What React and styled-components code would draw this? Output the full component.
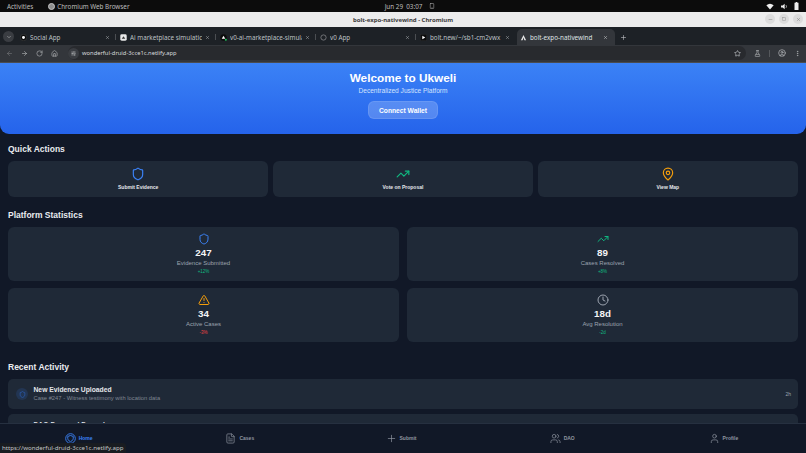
import React from 'react';
import styled, { createGlobalStyle } from 'styled-components';
import { Shield, TrendingUp, MapPin, TriangleAlert, Clock, FileText, Plus, Users, User, ArrowLeft, ArrowRight, RotateCw, House, Star, FlaskConical, CircleUser, EllipsisVertical, ChevronDown, X, Minus, Square, SlidersHorizontal, Smartphone } from 'lucide-react';

const Global = createGlobalStyle`
  html, body { margin: 0; padding: 0; background: #111827; }
  #root { width: 806px; height: 453px; overflow: hidden; }
  * { box-sizing: border-box; }
`;

const Screen = styled.div`
  position: relative; width: 806px; height: 453px; display: flex; flex-direction: column;
  overflow: hidden; font-family: "Liberation Sans", Arial, sans-serif; background: #111827;
`;
const OsBar = styled.div`
  height: 12px; flex: none; background: #0c0c0c; color: #bdbdbd; display: grid; grid-template-columns: 1fr auto 1fr;
  align-items: center; padding: 0 7px 0 7px; font: 6.3px "Noto Sans", sans-serif;
`;
const OsLeft = styled.div`display: flex; align-items: center; gap: 15px;`;
const OsApp = styled.span`display: flex; align-items: center; gap: 2px;`;
const OsLogo = styled.span`width: 7px; height: 7px; border-radius: 50%; background: #8f8f8f; border: 1px solid #c4c4c4;`;
const OsClock = styled.div`display: flex; align-items: center; gap: 7px; padding-left: 14px;`;
const OsTray = styled.div`display: flex; justify-content: flex-end; align-items: center; gap: 6px; color: #eee;`;
const TitleBar = styled.div`
  height: 15px; flex: none; background: #ececec; color: #3a3a3a; position: relative; display: flex;
  align-items: center; justify-content: center; font: 700 6px "Noto Sans", sans-serif;
`;
const WinButtons = styled.div`position: absolute; right: 3px; top: 2px; display: flex; gap: 4px;`;
const WinButton = styled.span`
  width: 10px; height: 10px; border-radius: 50%; background: #dcdcdc; color: #777;
  display: flex; align-items: center; justify-content: center;
`;
const TabStrip = styled.div`
  height: 18px; flex: none; background: #1d2126; display: flex; align-items: flex-end; padding-left: 3px; color: #c4c7c9;
  font: 6.3px "Noto Sans", sans-serif;
`;
const TabMenu = styled.span`
  width: 11px; height: 11px; border-radius: 50%; background: #3a3d42; margin: 0 3px 3px 0; display: flex;
  align-items: center; justify-content: center; flex: none;
`;
const Tab = styled.div`
  width: ${p => p.$w}px; height: 16px; flex: none; padding: 0 7px 0 3px; display: flex; align-items: center; gap: 3px;
  position: relative; background: ${p => p.$active ? '#33363b' : 'transparent'};
  border-radius: ${p => p.$active ? '5px 5px 0 0' : '0'};
  color: ${p => p.$active ? '#dfe1e3' : '#bcc0c3'};
  &::after {
    content: ${p => p.$sep ? '""' : 'none'}; position: absolute; right: 1px; top: 5px; width: 1px; height: 6px; background: #4b4e52;
  }
`;
const TabLabel = styled.span`flex: 1; overflow: hidden; white-space: nowrap;`;
const FaviconBox = styled.svg`width: 7px; height: 7px; flex: none;`;
const NewTab = styled.span`margin: 0 0 4px 5px; display: flex; color: #c4c7c9;`;
const Toolbar = styled.div`
  height: 18px; flex: none; background: #33363b; border-bottom: 1px solid #4a4c50; display: flex; align-items: center;
  padding: 0 5px 1px 6px; gap: 8px; color: #b8bbbe;
`;
const Omnibox = styled.div`
  flex: 1; height: 14px; background: #282a2e; border-radius: 7px; display: flex; align-items: center; gap: 3px; padding: 0 5px 0 0;
  margin-left: 2px; font: 5.8px "Noto Sans", sans-serif; color: #d8dadc;
`;
const SiteChip = styled.span`
  width: 11px; height: 11px; border-radius: 50%; background: #3a3d42; display: flex; align-items: center; justify-content: center;
`;
const Url = styled.span`flex: 1;`;
const Divider = styled.span`width: 1px; height: 7px; background: #55585c;`;
const Page = styled.div`
  flex: 1; min-height: 0; overflow: hidden; background: #111827;
`;
const Hero = styled.div`
  height: 71px; padding-top: 8px; background: linear-gradient(180deg, #3b82f6 0%, #2563eb 100%);
  border-radius: 0 0 9px 9px; display: flex; flex-direction: column; align-items: center;
`;
const HeroTitle = styled.h1`margin: 0; font-size: 11.8px; line-height: 15px; font-weight: 700; color: #fff;`;
const HeroSub = styled.p`margin: 0; font-size: 6.6px; line-height: 9px; color: #d3e3fd;`;
const WalletButton = styled.button`
  margin-top: 6px; width: 70px; height: 18px; border: 1px solid rgba(255,255,255,.1); border-radius: 6px;
  background: rgba(255,255,255,.2); color: #fff; font: 700 6.7px "Liberation Sans", Arial, sans-serif; padding: 0;
`;
const Section = styled.section`padding: 0 8px; margin-top: ${p => p.$top}px;`;
const Heading = styled.h2`margin: 0 0 6px; font-size: 8.5px; line-height: 12px; font-weight: 700; color: #e9ebef;`;
const ActionGrid = styled.div`display: grid; grid-template-columns: repeat(3, 1fr); gap: 4.5px;`;
const ActionCard = styled.div`
  height: 36px; background: #1f2937; border-radius: 6px; display: flex; flex-direction: column; align-items: center; padding-top: 6px;
  color: ${p => p.$c};
`;
const ActionLabel = styled.span`margin-top: 3px; font-size: 5px; line-height: 7px; font-weight: 700; color: #e5e7eb;`;
const StatGrid = styled.div`display: grid; grid-template-columns: 1fr 1fr; gap: 7px 8px;`;
const StatCard = styled.div`
  height: 54px; background: #1f2937; border-radius: 6px; display: flex; flex-direction: column; align-items: center; padding-top: 6px;
  color: ${p => p.$c};
`;
const StatValue = styled.div`margin-top: 2px; font-size: 9.8px; line-height: 12px; font-weight: 700; color: #f3f4f6;`;
const StatLabel = styled.div`margin-top: 1px; font-size: 6px; line-height: 7px; color: #9ca3af;`;
const StatDelta = styled.div`margin-top: 2px; font-size: 4.5px; line-height: 6px; color: ${p => p.$c};`;
const ActivityList = styled.div`display: flex; flex-direction: column; gap: 5px;`;
const ActivityItem = styled.div`
  height: 30px; flex: none; background: #1f2937; border-radius: 5px; display: flex; align-items: center; padding: 0 7px 0 8px;
`;
const ActivityIcon = styled.span`
  width: 12px; height: 12px; border-radius: 50%; background: rgba(59,130,246,.14); color: #2f68c9; display: flex;
  align-items: center; justify-content: center; flex: none; margin-right: 5.5px;
`;
const ActivityText = styled.div`flex: 1; min-width: 0;`;
const ActivityTitle = styled.div`font-size: 6.75px; line-height: 8px; font-weight: 700; color: #e5e7eb;`;
const ActivitySub = styled.div`margin-top: 1px; font-size: 5.8px; line-height: 7px; color: #7f8793;`;
const ActivityTime = styled.span`font-size: 5px; color: #9ca3af;`;
const BottomNav = styled.nav`
  position: relative; height: 30px; flex: none; background: #111827; border-top: 1px solid #263040; display: grid; grid-template-columns: repeat(5, 1fr);
  padding-bottom: 1px;
`;
const NavItem = styled.div`
  display: flex; align-items: center; justify-content: center; gap: 3px; padding-right: 4px;
  color: ${p => p.$active ? '#3b82f6' : '#8f95a0'};
  font-size: 5px; line-height: 7px; font-weight: 700;
`;
const StatusBubble = styled.div`
  position: absolute; left: 0; bottom: 0; height: 10px; padding: 0 3px 0 2px; background: #191c21; color: #c2c4c6;
  font: 6.15px/10px "Noto Sans", sans-serif; border-radius: 0 3px 0 0;
`;

function Favicon({ kind }) {
  const glyphs = {
    dot: <><circle cx="12" cy="12" r="11" fill="#0b0b0b" stroke="#777" /><circle cx="12" cy="12" r="5" fill="#fff" /></>,
    market: <><rect x="1" y="1" width="22" height="22" rx="5" fill="#e8e8e8" /><path d="M6 16 L12 8 L18 16 Z" fill="#333" /></>,
    vercel: <><circle cx="12" cy="12" r="11" fill="#0b0b0b" /><path d="M12 6 L18 16 H6 Z" fill="#fff" /><circle cx="20" cy="20" r="3.5" fill="#22c55e" /></>,
    ring: <circle cx="12" cy="12" r="9" fill="none" stroke="#7a7d80" strokeWidth="3" />,
    bolt: <><rect x="1" y="1" width="22" height="22" rx="4" fill="#0b0b0b" stroke="#555" /><path d="M8 6 L18 12 L8 18 Z" fill="#fff" /></>,
    expo: <path d="M12 3 L3 21 H9 L12 12 L15 21 H21 Z" fill="#e6e6e6" />,
  };
  return <FaviconBox viewBox="0 0 24 24">{glyphs[kind]}</FaviconBox>;
}

const WifiGlyph = () => (
  <svg width="8" height="7" viewBox="0 0 24 20"><path d="M1 6 Q12 -3 23 6 L12 19 Z" fill="currentColor" /></svg>
);
const VolumeGlyph = () => (
  <svg width="8" height="7" viewBox="0 0 24 20" fill="none"><path d="M3 7 H8 L14 2 V18 L8 13 H3 Z" fill="currentColor" /><path d="M18 6 Q21 10 18 14" stroke="currentColor" strokeWidth="2" /></svg>
);
const BatteryGlyph = () => (
  <svg width="5" height="8" viewBox="0 0 12 20"><path d="M4 0 H8 V2 H11 V20 H1 V2 H4 Z" fill="currentColor" /></svg>
);
const HomeGlyph = ({ size }) => (
  <svg width={size} height={size} viewBox="0 0 24 24" fill="none" stroke="currentColor" strokeWidth="2" strokeLinejoin="round">
    <circle cx="12" cy="12" r="10.5" />
    <path d="M12 19s6-2.6 6-7V7.5L12 5.5 6 7.5V12c0 4.4 6 7 6 7z" />
  </svg>
);

const tabs = [
  { w: 100, label: 'Social App', kind: 'dot', sep: true },
  { w: 100, label: 'Ai marketplace simulatic', kind: 'market', sep: true },
  { w: 100, label: 'v0-ai-marketplace-simula', kind: 'vercel', sep: true },
  { w: 100, label: 'v0 App', kind: 'ring', sep: true },
  { w: 100, label: 'bolt.new/~/sb1-cm2vwx', kind: 'bolt' },
  { w: 98, label: 'bolt-expo-nativewind', kind: 'expo', active: true },
];
const actions = [
  { Icon: Shield, c: '#3b82f6', label: 'Submit Evidence' },
  { Icon: TrendingUp, c: '#10b981', label: 'Vote on Proposal' },
  { Icon: MapPin, c: '#f59e0b', label: 'View Map' },
];
const stats = [
  { Icon: Shield, c: '#3b82f6', value: '247', label: 'Evidence Submitted', delta: '+12%', dc: '#10b981' },
  { Icon: TrendingUp, c: '#10b981', value: '89', label: 'Cases Resolved', delta: '+8%', dc: '#10b981' },
  { Icon: TriangleAlert, c: '#f59e0b', value: '34', label: 'Active Cases', delta: '-3%', dc: '#ef4444' },
  { Icon: Clock, c: '#9ca3af', value: '18d', label: 'Avg Resolution', delta: '-2d', dc: '#10b981' },
];
const nav = [
  { Icon: HomeGlyph, label: 'Home', active: true },
  { Icon: FileText, label: 'Cases' },
  { Icon: Plus, label: 'Submit' },
  { Icon: Users, label: 'DAO' },
  { Icon: User, label: 'Profile' },
];

export default function App() {
  return (
    <Screen>
      <Global />
      <OsBar>
        <OsLeft><span>Activities</span><OsApp><OsLogo />Chromium Web Browser</OsApp></OsLeft>
        <OsClock><span>Jun 29&nbsp;&nbsp;03:07</span><Smartphone size={6} /></OsClock>
        <OsTray><WifiGlyph /><VolumeGlyph /><BatteryGlyph /></OsTray>
      </OsBar>
      <TitleBar>
        bolt-expo-nativewind - Chromium
        <WinButtons>
          <WinButton><Minus size={5} /></WinButton>
          <WinButton><Square size={4} /></WinButton>
          <WinButton><X size={5} /></WinButton>
        </WinButtons>
      </TitleBar>
      <TabStrip>
        <TabMenu><ChevronDown size={6} /></TabMenu>
        {tabs.map(t => (
          <Tab key={t.label} $w={t.w} $active={t.active} $sep={t.sep}>
            <Favicon kind={t.kind} />
            <TabLabel>{t.label}</TabLabel>
            <X size={5} />
          </Tab>
        ))}
        <NewTab><Plus size={7} /></NewTab>
      </TabStrip>
      <Toolbar>
        <ArrowLeft size={7} color="#77797c" />
        <ArrowRight size={7} />
        <RotateCw size={7} />
        <House size={7} />
        <Omnibox>
          <SiteChip><SlidersHorizontal size={5} /></SiteChip>
          <Url>wonderful-druid-3cce1c.netlify.app</Url>
          <Star size={7} />
        </Omnibox>
        <FlaskConical size={7} />
        <Divider />
        <CircleUser size={8} />
        <EllipsisVertical size={7} />
      </Toolbar>
      <Page>
        <Hero>
          <HeroTitle>Welcome to Ukweli</HeroTitle>
          <HeroSub>Decentralized Justice Platform</HeroSub>
          <WalletButton>Connect Wallet</WalletButton>
        </Hero>
        <Section $top={9}>
          <Heading>Quick Actions</Heading>
          <ActionGrid>
            {actions.map(({ Icon, c, label }) => (
              <ActionCard key={label} $c={c}>
                <Icon size={14} strokeWidth={2} />
                <ActionLabel>{label}</ActionLabel>
              </ActionCard>
            ))}
          </ActionGrid>
        </Section>
        <Section $top={12}>
          <Heading>Platform Statistics</Heading>
          <StatGrid>
            {stats.map(({ Icon, c, value, label, delta, dc }) => (
              <StatCard key={label} $c={c}>
                <Icon size={12} strokeWidth={2} />
                <StatValue>{value}</StatValue>
                <StatLabel>{label}</StatLabel>
                <StatDelta $c={dc}>{delta}</StatDelta>
              </StatCard>
            ))}
          </StatGrid>
        </Section>
        <Section $top={19}>
          <Heading>Recent Activity</Heading>
          <ActivityList>
            <ActivityItem>
              <ActivityIcon><Shield size={7} /></ActivityIcon>
              <ActivityText>
                <ActivityTitle>New Evidence Uploaded</ActivityTitle>
                <ActivitySub>Case #247 - Witness testimony with location data</ActivitySub>
              </ActivityText>
              <ActivityTime>2h</ActivityTime>
            </ActivityItem>
            <ActivityItem>
              <ActivityIcon />
              <ActivityText>
                <ActivityTitle>DAO Proposal Passed</ActivityTitle>
                <ActivitySub>Proposal #12 - Funding approved</ActivitySub>
              </ActivityText>
              <ActivityTime>5h</ActivityTime>
            </ActivityItem>
          </ActivityList>
        </Section>
      </Page>
      <BottomNav>
        {nav.map(({ Icon, label, active }) => (
          <NavItem key={label} $active={active}>
            <Icon size={11} strokeWidth={1.5} />
            {label}
          </NavItem>
        ))}
      </BottomNav>
      <StatusBubble>https://wonderful-druid-3cce1c.netlify.app</StatusBubble>
    </Screen>
  );
}
